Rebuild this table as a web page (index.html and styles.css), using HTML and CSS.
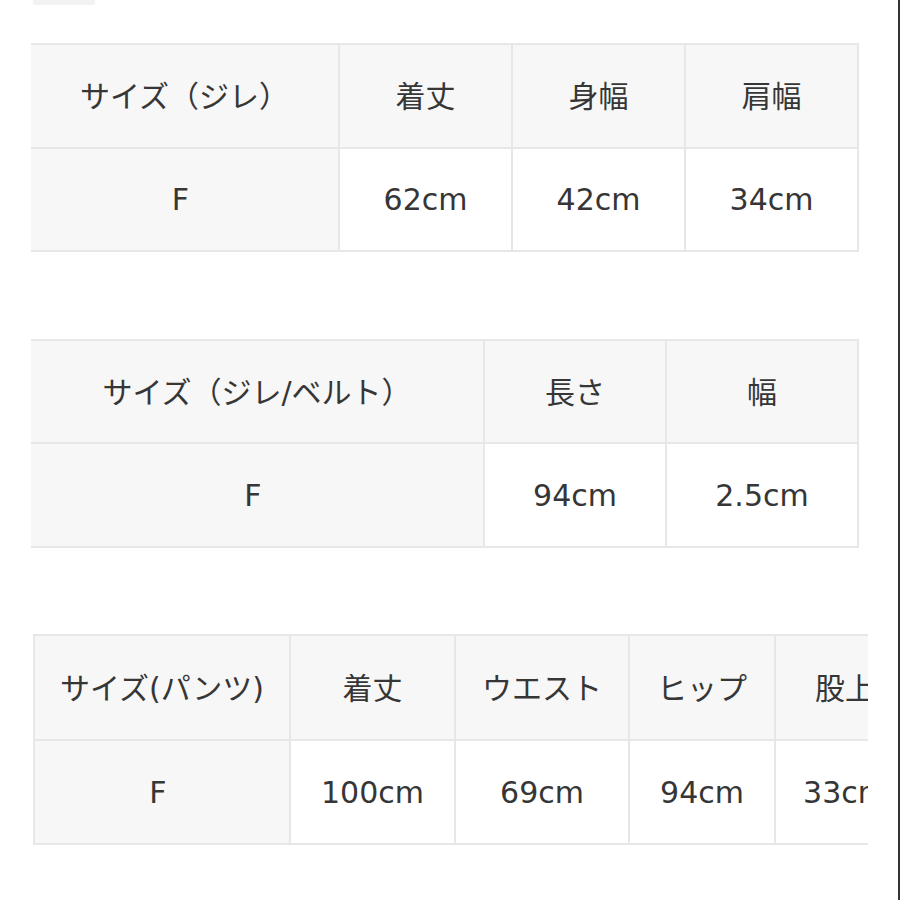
FILE: index.html
```html
<!DOCTYPE html>
<html lang="ja">
<head>
<meta charset="utf-8">
<title>サイズ表</title>
<link rel="stylesheet" href="styles.css">
</head>
<body>
<div class="page">
  <div class="stub"></div>

  <table class="size t1">
    <colgroup>
      <col class="w309"><col class="w173"><col class="w173"><col class="w173">
    </colgroup>
    <tr class="head"><th>サイズ（ジレ）</th><th>着丈</th><th>身幅</th><th>肩幅</th></tr>
    <tr class="body"><td class="label">F</td><td>62cm</td><td>42cm</td><td>34cm</td></tr>
  </table>

  <table class="size t2">
    <colgroup>
      <col class="w454"><col class="w182"><col class="w192">
    </colgroup>
    <tr class="head"><th>サイズ（ジレ/ベルト）</th><th>長さ</th><th>幅</th></tr>
    <tr class="body"><td class="label">F</td><td>94cm</td><td>2.5cm</td></tr>
  </table>

  <div class="scroll">
    <table class="size t3">
      <colgroup>
        <col class="w258"><col class="w165"><col class="w174"><col class="w146"><col class="w140">
      </colgroup>
      <tr class="head"><th>サイズ(パンツ)</th><th>着丈</th><th>ウエスト</th><th>ヒップ</th><th>股上</th></tr>
      <tr class="body"><td class="label">F</td><td>100cm</td><td>69cm</td><td>94cm</td><td>33cm</td></tr>
    </table>
  </div>
</div>
</body>
</html>
```

FILE: styles.css
```css
* {
  box-sizing: border-box;
}

body {
  margin: 0;
  background: #ffffff;
}

.page {
  width: 900px;
  height: 900px;
  overflow: hidden;
  border-right: 2px solid #333333;
  font-family: "DejaVu Sans", "Noto Sans CJK JP", sans-serif;
  font-size: 30px;
  color: #363636;
}

.stub {
  margin-left: 33px;
  width: 62px;
  height: 5px;
  background: #f2f2f2;
  border-radius: 0 0 3px 3px;
}

.size {
  border-collapse: separate;
  border-spacing: 0;
  table-layout: fixed;
  border-top: 2px solid #e7e7e7;
}

.size th,
.size td {
  padding: 0;
  text-align: center;
  vertical-align: middle;
  font-weight: normal;
  white-space: nowrap;
  border-right: 2px solid #e7e7e7;
  border-bottom: 2px solid #e7e7e7;
}

.size th {
  background: #f7f7f7;
  padding-bottom: 4px;
}

.size td {
  background: #ffffff;
}

.size td.label {
  background: #f7f7f7;
  padding-right: 8px;
}

.w309 { width: 309px; }
.w173 { width: 173px; }
.w454 { width: 454px; }
.w182 { width: 182px; }
.w192 { width: 192px; }
.w258 { width: 258px; }
.w165 { width: 165px; }
.w174 { width: 174px; }
.w146 { width: 146px; }
.w140 { width: 140px; }

.t1 {
  margin: 38px 0 0 31px;
  width: 828px;
}

.t1 .head { height: 104px; }
.t1 .body { height: 103px; }

.t2 {
  margin: 87px 0 0 31px;
  width: 828px;
}

.t2 .head { height: 103px; }
.t2 .body { height: 104px; }

.scroll {
  margin: 86px 0 0 33px;
  width: 835px;
  overflow: hidden;
}

.t3 {
  width: 883px;
}

.t3 .head { height: 105px; }
.t3 .body { height: 104px; }

.t3 th:first-child,
.t3 td:first-child {
  border-left: 2px solid #e7e7e7;
}
```
